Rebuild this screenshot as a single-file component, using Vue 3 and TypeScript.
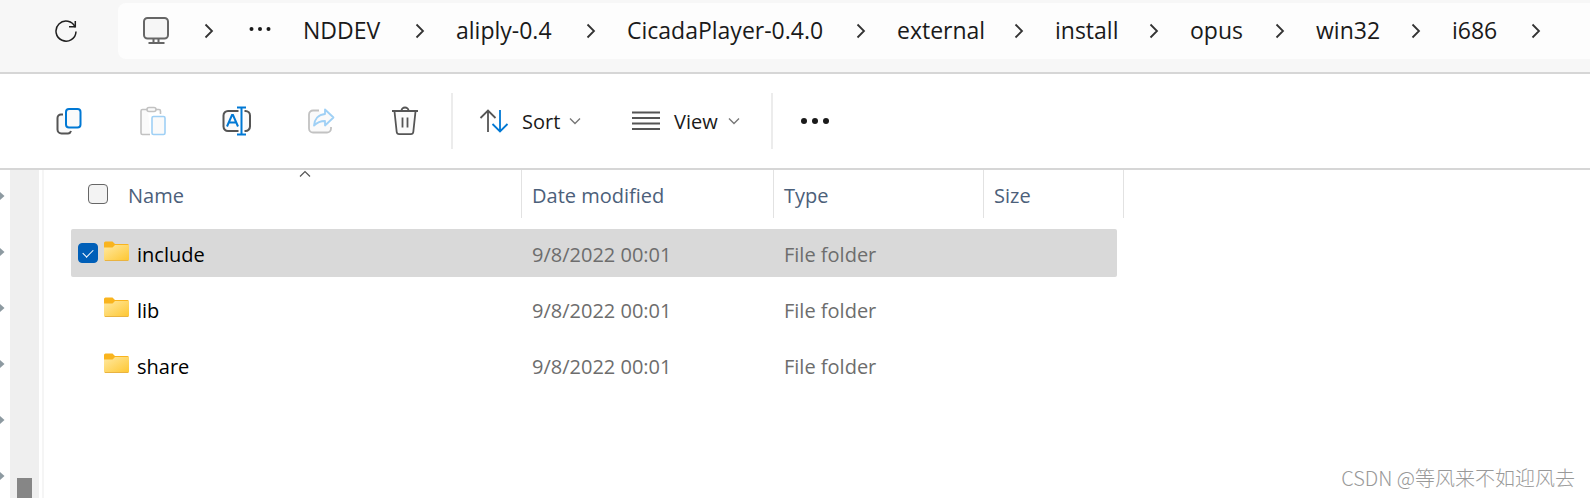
<script setup lang="ts">
import { ref } from 'vue'

interface Entry {
  name: string
  modified: string
  kind: string
  selected: boolean
}

const crumbs: { label: string; width: number }[] = [
  { label: 'NDDEV', width: 80 },
  { label: 'aliply-0.4', width: 98 },
  { label: 'CicadaPlayer-0.4.0', width: 197 },
  { label: 'external', width: 85 },
  { label: 'install', width: 62 },
  { label: 'opus', width: 53 },
  { label: 'win32', width: 63 },
  { label: 'i686', width: 47 },
]

const entries = ref<Entry[]>([
  { name: 'include', modified: '9/8/2022 00:01', kind: 'File folder', selected: true },
  { name: 'lib', modified: '9/8/2022 00:01', kind: 'File folder', selected: false },
  { name: 'share', modified: '9/8/2022 00:01', kind: 'File folder', selected: false },
])

const allSelected = ref(false)
const pins = 6
</script>

<template>
  <div class="explorer">
    <header class="address-bar">
      <button class="refresh" type="button" aria-label="Refresh">
        <svg width="24" height="24" viewBox="0 0 24 24" fill="none" stroke="#1f1f1f" stroke-width="1.5">
          <path d="M21.2 8.2A10 10 0 1 0 22 12.4" />
          <path d="M21.3 2v5.700h-6.300" />
        </svg>
      </button>
      <nav class="path" aria-label="Path">
        <button class="device" type="button" aria-label="This PC">
          <svg width="28" height="28" viewBox="0 0 28 28" fill="none" stroke="#666" stroke-width="2">
            <rect x="2" y="1" width="24" height="20.500" rx="3.5" fill="#f6f6f6" />
            <path d="M11.5 21.500v4M16.500 21.500v4M6.500 26h16" />
          </svg>
        </button>
        <svg class="chevron" width="10" height="16" viewBox="0 0 10 16"><path d="M1.500 1.500 8 8l-6.500 6.500" /></svg>
        <button class="overflow" type="button" aria-label="More locations">
          <svg width="22" height="6" viewBox="0 0 22 6" fill="#1a1a1a">
            <circle cx="2.500" cy="3" r="2" /><circle cx="11" cy="3" r="2" /><circle cx="19.500" cy="3" r="2" />
          </svg>
        </button>
        <template v-for="c in crumbs" :key="c.label">
          <a class="crumb" href="#" :style="{ width: c.width + 'px' }">{{ c.label }}</a>
          <svg class="chevron" width="10" height="16" viewBox="0 0 10 16"><path d="M1.500 1.500 8 8l-6.500 6.500" /></svg>
        </template>
      </nav>
    </header>

    <div class="toolbar" role="toolbar">
      <button class="tool" type="button" aria-label="Copy">
        <svg width="30" height="30" viewBox="0 0 30 30" fill="#fafafa" stroke-width="2">
          <path d="M9 8.500H7a3.500 3.500 0 0 0-3.500 3.500v11.500a4 4 0 0 0 4 4h6.500a3.500 3.500 0 0 0 3-2.500" stroke="#555" />
          <rect x="12" y="3" width="14.500" height="18.500" rx="3" stroke="#0078d4" />
        </svg>
      </button>
      <button class="tool" type="button" aria-label="Paste" disabled>
        <svg width="30" height="30" viewBox="0 0 30 30" fill="#fafafa" stroke="#c2c2c2" stroke-width="1.600">
          <path d="M10 3.500H4.500a1.500 1.500 0 0 0-1.500 1.500v22a1.500 1.500 0 0 0 1.500 1.500H12M18 3.500h3a1.500 1.500 0 0 1 1.500 1.500v3" />
          <rect x="9" y="1.500" width="9" height="4" rx="2" />
          <rect x="14" y="10.500" width="13" height="18" rx="1.500" stroke="#9fd0f5" />
        </svg>
      </button>
      <button class="tool" type="button" aria-label="Rename">
        <svg width="30" height="30" viewBox="0 0 30 30" fill="none" stroke="#555" stroke-width="2">
          <path d="M16.500 5H6a4.500 4.500 0 0 0-4.500 4.500v11A4.500 4.500 0 0 0 6 25h10.500M22.500 5h1a4.500 4.500 0 0 1 4.500 4.500v11a4.500 4.500 0 0 1-4.500 4.500h-1" fill="#fafafa" />
          <path d="m5 20.500 5-11.500h1l5 11.500M7 16.500h7M15 1.500h9M15 28.500h9M19.500 1.500v27" stroke="#0078d4" />
        </svg>
      </button>
      <button class="tool" type="button" aria-label="Share" disabled>
        <svg width="30" height="30" viewBox="0 0 30 30" fill="#fafafa" stroke="#c2c2c2" stroke-width="1.800" stroke-linejoin="round">
          <path d="M13 4.500H7A4 4 0 0 0 3 8.500v14a4 4 0 0 0 4 4h14a4 4 0 0 0 4-4v-1.500" />
          <path d="M19 3.500 27.500 11.500 19 19.500V15c-5 0-8 1.500-11 4.500.5-6 4-11 11-11.500Z" stroke="#9fd0f5" />
        </svg>
      </button>
      <button class="tool" type="button" aria-label="Delete">
        <svg width="30" height="30" viewBox="0 0 30 30" fill="none" stroke="#555" stroke-width="1.800">
          <path d="m4.500 5.500 2.200 20.500a2.500 2.500 0 0 0 2.500 2.200h11.600a2.500 2.500 0 0 0 2.500-2.200L25.500 5.500" fill="#fafafa" />
          <path d="M2 5h26M11.500 5V4.500a3.500 3 0 0 1 7 0V5M12.500 11.500v10M17.500 11.500v10" />
        </svg>
      </button>
      <span class="rule"></span>
      <button class="menu" type="button">
        <svg width="30" height="30" viewBox="0 0 30 30" fill="none" stroke-width="1.800">
          <path d="M9 26V4.500M1.500 12 9 4.500 16.500 12" stroke="#555" />
          <path d="M21 4v21.500M13.500 18 21 25.500 28.500 18" stroke="#0078d4" />
        </svg>
        <span class="menu-label sort">Sort</span>
        <svg class="drop" width="12" height="8" viewBox="0 0 12 8"><path d="m1 1.500 5 5 5-5" /></svg>
      </button>
      <button class="menu" type="button">
        <svg width="30" height="30" viewBox="0 0 30 30" stroke="#555" stroke-width="1.800">
          <path d="M1 6.500h28M1 12h28M1 17.500h28M1 23h28" />
        </svg>
        <span class="menu-label view">View</span>
        <svg class="drop" width="12" height="8" viewBox="0 0 12 8"><path d="m1 1.500 5 5 5-5" /></svg>
      </button>
      <span class="rule last"></span>
      <button class="more" type="button" aria-label="See more">
        <svg width="30" height="8" viewBox="0 0 30 8" fill="#1a1a1a">
          <circle cx="4" cy="4" r="3" /><circle cx="15" cy="4" r="3" /><circle cx="26" cy="4" r="3" />
        </svg>
      </button>
    </div>

    <main class="body">
      <aside class="pins">
        <svg v-for="n in pins" :key="n" width="5" height="8" viewBox="0 0 5 8"><path d="M0 0 4.500 4 0 8Z" fill="#8d9aa1" /></svg>
      </aside>
      <div class="scrollbar"><span class="thumb"></span></div>
      <div class="splitter"></div>
      <table class="files">
        <thead>
          <tr>
            <th class="col-name">
              <input v-model="allSelected" class="box" type="checkbox" aria-label="Select all" />
              <span>Name</span>
              <svg class="caret" width="12" height="8" viewBox="0 0 12 8"><path d="m1 6.500 5-5 5 5" /></svg>
            </th>
            <th>Date modified</th>
            <th>Type</th>
            <th>Size</th>
          </tr>
        </thead>
        <tbody>
          <tr v-for="e in entries" :key="e.name" :class="{ selected: e.selected }">
            <td class="name">
              <input v-model="e.selected" class="box" type="checkbox" :aria-label="e.name" />
              <svg class="folder" width="25" height="21" viewBox="0 0 25 21">
                <defs>
                  <linearGradient :id="'f-' + e.name" x1="0" y1="0" x2="1" y2="1">
                    <stop offset="0" stop-color="#ffe9a2" />
                    <stop offset="1" stop-color="#fec62f" />
                  </linearGradient>
                </defs>
                <path d="M0 2a1.500 1.500 0 0 1 1.500-1.500h7L11 3h12.500A1.500 1.500 0 0 1 25 4.500V10H0Z" fill="#f9b41e" />
                <path d="M0 6.500h8.500L11 4h14v14.500a1.500 1.500 0 0 1-1.500 1.500h-22A1.500 1.500 0 0 1 0 18.500Z" :fill="'url(#f-' + e.name + ')'" />
                <path d="M1 19.500h23" stroke="#e9b341" />
              </svg>
              <span>{{ e.name }}</span>
            </td>
            <td>{{ e.modified }}</td>
            <td>{{ e.kind }}</td>
            <td></td>
          </tr>
        </tbody>
      </table>
      <footer class="credit">CSDN @等风来不如迎风去</footer>
    </main>
  </div>
</template>

<style>
body {
  margin: 0;
  background: #fff;
}
</style>

<style scoped>
.explorer {
  display: flex;
  flex-direction: column;
  min-height: 100vh;
  overflow: hidden;
  font-family: "Open Sans", "Noto Sans", sans-serif;
  color: #1a1a1a;
}
.explorer * {
  box-sizing: border-box;
}
svg {
  display: block;
  flex: none;
}
button {
  display: flex;
  align-items: center;
  justify-content: center;
  flex: none;
  padding: 0;
  border: 0;
  background: none;
  font: inherit;
  color: inherit;
}
.address-bar {
  display: flex;
  align-items: flex-start;
  padding-top: 3px;
  height: 74px;
  border-bottom: 2px solid #d6d6d6;
  background: #f7f7f7;
}
.refresh {
  width: 24px;
  height: 56px;
  margin: 0 40px 0 54px;
}
.path {
  display: flex;
  align-items: center;
  flex: 1;
  min-width: 0;
  height: 56px;
  padding-left: 24px;
  border-radius: 8px 0 0 8px;
  background: #fdfdfd;
}
.device {
  width: 28px;
  margin-right: 34px;
}
.chevron {
  fill: none;
  stroke: #333;
  stroke-width: 1.8;
}
.overflow {
  width: 22px;
  margin: 0 32px 4px 35px;
}
.crumb {
  flex: none;
  margin-right: 32px;
  padding-bottom: 2px;
  font-size: 23px;
  line-height: 32px;
  white-space: nowrap;
  color: inherit;
  text-decoration: none;
}
.crumb + .chevron {
  margin-right: 31px;
}
.toolbar {
  display: flex;
  align-items: center;
  height: 96px;
  padding-left: 54px;
  border-bottom: 2px solid #d6d6d6;
}
.tool {
  width: 30px;
  margin-right: 54px;
}
.rule {
  width: 2px;
  height: 56px;
  margin-left: -23px;
  background: #ececec;
}
.rule.last {
  margin-left: -19px;
}
.rule + .menu {
  margin-left: 26px;
}
.menu {
  margin-right: 50px;
}
.menu-label {
  margin-left: 13px;
  padding-top: 2px;
  font-size: 20px;
  line-height: 28px;
  text-align: left;
}
.sort {
  width: 47px;
}
.view {
  width: 54px;
}
.drop {
  fill: none;
  stroke: #777;
  stroke-width: 1.4;
}
.more {
  margin-left: 27px;
}
.body {
  display: flex;
  flex: 1;
  position: relative;
}
.pins {
  display: flex;
  flex-direction: column;
  gap: 48px;
  width: 10px;
  padding-top: 22px;
}
.scrollbar {
  display: flex;
  align-items: flex-end;
  justify-content: center;
  width: 29px;
  background: #efefef;
}
.thumb {
  width: 15px;
  height: 20px;
  background: #868686;
}
.splitter {
  width: 2px;
  margin: 0 27px 0 3px;
  background: #f5f5f5;
}
.files {
  display: block;
  font-size: 20px;
  line-height: 28px;
}
tr {
  display: grid;
  grid-template-columns: 451px 252px 210px 140px;
}
thead {
  display: block;
  margin-bottom: 11px;
}
th {
  display: flex;
  align-items: center;
  height: 48px;
  padding: 4px 0 0 10px;
  border-right: 1px solid #e2e2e2;
  font-weight: 400;
  color: #4c607a;
}
.col-name {
  position: relative;
  gap: 20px;
  padding-left: 17px;
}
.caret {
  position: absolute;
  top: 0;
  left: calc(50% + 3px);
  fill: none;
  stroke: #555;
  stroke-width: 1.2;
}
tbody {
  display: flex;
  flex-direction: column;
  gap: 8px;
}
tbody tr {
  width: 1046px;
  height: 48px;
  border-radius: 2px;
}
.selected {
  background: #d9d9d9;
}
td {
  display: flex;
  align-items: center;
  padding: 4px 0 0 10px;
  color: #6d6d6d;
}
td.name {
  padding-left: 7px;
  color: #000;
}
.box {
  display: grid;
  place-items: center;
  appearance: none;
  flex: none;
  width: 20px;
  height: 20px;
  margin: 0 0 4px;
  border: 1px solid #666;
  border-radius: 4px;
  background: #f3f3f3;
}
td .box {
  visibility: hidden;
}
td .box:checked {
  visibility: visible;
  border-color: #005fb8;
  background: #005fb8;
}
.box:checked::after {
  content: "";
  width: 9px;
  height: 5px;
  margin-bottom: 3px;
  border: solid #fff;
  border-width: 0 0 1px 1px;
  transform: rotate(-45deg);
}
.folder {
  margin: 0 8px 8px 6px;
}
.credit {
  position: absolute;
  right: 15px;
  bottom: 6px;
  font-family: "Noto Sans CJK SC", sans-serif;
  font-size: 20px;
  font-weight: 300;
  line-height: 28px;
  color: #999;
}
</style>
